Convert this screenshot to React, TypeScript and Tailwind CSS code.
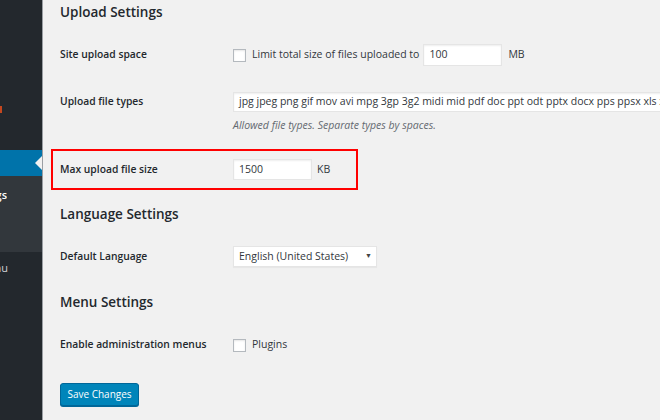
import React from 'react';

const font = { fontFamily: '"Open Sans", "Noto Sans", sans-serif' };

const Checkbox = () => (
  <span className="w-[13px] h-[13px] bg-white border border-[#b4b9be] shadow-[inset_0_1px_2px_rgba(0,0,0,0.1)] shrink-0" />
);

const Sidebar = () => (
  <div className="flex shrink-0 h-[420px]">
    <div className="w-[42px] flex flex-col bg-[#23282d]">
      <div className="h-[150px] flex flex-col">
        <div className="h-[106px]" />
        <div className="w-[2px] h-[7px] bg-[#c4471f]" />
      </div>
      {/* current item */}
      <div className="relative h-[26px] bg-[#0073aa]">
        <span className="absolute right-0 top-1/2 -translate-y-1/2 w-0 h-0 border-y-[7px] border-y-transparent border-r-[7px] border-r-[#f1f1f1]" />
      </div>
      <div className="h-[76px] bg-[#32373c] pt-[12px]">
        <div className="flex justify-end overflow-hidden w-[7px] whitespace-nowrap text-[11px] font-semibold text-white leading-[14px]">
          Settings
        </div>
      </div>
      <div className="pt-[9px]">
        <div className="flex justify-end overflow-hidden w-[8px] whitespace-nowrap text-[11px] text-[#d0d3d6] leading-[14px]">
          Collapse menu
        </div>
      </div>
    </div>
    <div className="w-[1px] bg-[#9a9ea3]" />
  </div>
);

const Heading = ({ children }: { children: React.ReactNode }) => (
  <div className="h-[24px] flex items-center text-[13.5px] font-semibold text-[#23282d]">{children}</div>
);

const Label = ({ children }: { children: React.ReactNode }) => (
  <div className="w-[173px] shrink-0 text-[10.3px] font-semibold text-[#23282d]">{children}</div>
);

const TextBox = ({ value, w }: { value: string; w: string }) => (
  <div className={`${w} h-full bg-white border border-[#e5e5e5] shadow-[inset_0_1px_2px_rgba(0,0,0,0.07)] flex items-center px-[5px] text-[10.5px] text-[#32373c] whitespace-nowrap overflow-hidden`}>
    {value}
  </div>
);

export default function App() {
  return (
    <div className="flex w-[660px] h-[420px] overflow-hidden bg-[#f1f1f1]" style={font}>
      <Sidebar />
      <main className="flex-1 min-w-0 pl-[17px] flex flex-col">
        <Heading>Upload Settings</Heading>

        <div className="mt-[20px] h-[22px] flex items-center">
          <Label>Site upload space</Label>
          <Checkbox />
          <span className="ml-[6px] text-[10.5px] text-[#32373c]">Limit total size of files uploaded to</span>
          <div className="ml-[4px] h-full">
            <TextBox value="100" w="w-[79px]" />
          </div>
          <span className="ml-[6px] text-[10.5px] text-[#32373c]">MB</span>
        </div>

        <div className="mt-[26px] h-[20px] flex items-center">
          <Label>Upload file types</Label>
          <div className="h-full flex-1 min-w-0">
            <TextBox value="jpg jpeg png gif mov avi mpg 3gp 3g2 midi mid pdf doc ppt odt pptx docx pps ppsx xls xlsx key mp3 ogg flac m4a wav mp4 m4v webm ogv flv" w="w-[460px]" />
          </div>
        </div>
        <div className="mt-[6px] h-[16px] flex items-center pl-[173px] text-[10.5px] italic text-[#646970]">
          Allowed file types. Separate types by spaces.
        </div>

        <div className="mt-[15px] h-[41px] w-[307px] -ml-[9px] pl-[7px] border-2 border-[#ff0000] flex items-center">
          <Label>Max upload file size</Label>
          <div className="h-[21px]">
            <TextBox value="1500" w="w-[79px]" />
          </div>
          <span className="ml-[5px] text-[10.5px] text-[#32373c]">KB</span>
        </div>

        <div className="mt-[12px]">
          <Heading>Language Settings</Heading>
        </div>

        <div className="mt-[20px] h-[21px] flex items-center">
          <Label>Default Language</Label>
          <div className="w-[144px] h-full bg-white border border-[#e5e5e5] shadow-[0_1px_1px_rgba(0,0,0,0.04)] flex items-center justify-between pl-[5px] pr-[4px] text-[10.5px] text-[#32373c]">
            <span>English (United States)</span>
            <span className="text-[7px] text-[#444]">▼</span>
          </div>
        </div>

        <div className="mt-[23px]">
          <Heading>Menu Settings</Heading>
        </div>

        <div className="mt-[20px] h-[22px] flex items-center">
          <Label>Enable administration menus</Label>
          <Checkbox />
          <span className="ml-[6px] text-[10.5px] text-[#32373c]">Plugins</span>
        </div>

        <div className="mt-[24px]">
          <button className="h-[23px] w-[79px] rounded-[3px] bg-[#0085ba] border border-[#006799] shadow-[0_1px_0_#006799] text-white text-[10px] whitespace-nowrap">
            Save Changes
          </button>
        </div>
      </main>
    </div>
  );
}
